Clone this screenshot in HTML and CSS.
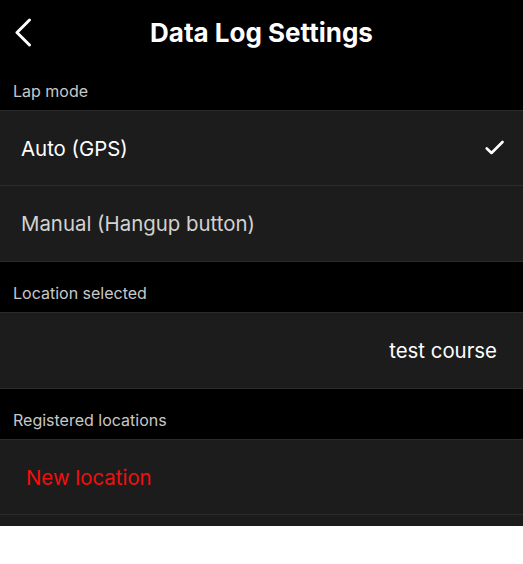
FILE: index.html
```html
<!DOCTYPE html>
<html lang="en">
<head>
    <meta charset="UTF-8">
    <meta name="viewport" content="width=device-width, initial-scale=1.0">
    <title>Data Log Settings</title>
    <link rel="stylesheet" href="styles.css">
</head>
<body>
    <div class="tela">
        <header class="barra">
            <a class="voltar" href="#">
                <svg width="20" height="30" viewBox="0 0 20 30">
                    <path d="M15.5 2 L3 14.5 L15.5 27" fill="none" stroke="#fff" stroke-width="3" stroke-linecap="round" stroke-linejoin="round"/>
                </svg>
            </a>
            <h1 class="titulo">Data Log Settings</h1>
        </header>

        <div class="secao">Lap mode</div>
        <div class="linha">
            <span>Auto (GPS)</span>
            <svg class="check" width="20" height="16" viewBox="0 0 20 16">
                <path d="M1.8 8.5 L6.5 13 L17.5 2" fill="none" stroke="#fff" stroke-width="2.6" stroke-linecap="round" stroke-linejoin="round"/>
            </svg>
        </div>
        <div class="linha apagada">
            <span>Manual (Hangup button)</span>
        </div>

        <div class="secao">Location selected</div>
        <div class="linha direita">
            <span>test course</span>
        </div>

        <div class="secao">Registered locations</div>
        <div class="linha novo">
            <span>New location</span>
        </div>
        <div class="linha"></div>
    </div>
</body>
</html>
```

FILE: styles.css
```css
body {
    margin: 0;
    background-color: #fff;
    font-family: Inter, "Noto Sans", sans-serif;
}

.tela {
    width: 523px;
    height: 526px;
    background-color: #000;
    overflow: hidden;
}

.barra {
    height: 59.6px;
    display: flex;
    align-items: center;
    justify-content: center;
    position: relative;
}

.voltar {
    position: absolute;
    left: 14px;
    top: 18px;
    display: flex;
}

.titulo {
    margin: 0;
    color: #fff;
    font-size: 26px;
    font-weight: 700;
    margin-top: 6px;
}

.secao {
    height: 51.4px;
    box-sizing: border-box;
    display: flex;
    align-items: flex-end;
    padding: 0 13px 9px;
    color: #c8c8c8;
    font-size: 16px;
    border-bottom: 1px solid #2c2c2c;
}

.linha {
    height: 75.4px;
    box-sizing: border-box;
    display: flex;
    align-items: center;
    justify-content: space-between;
    padding: 0 18px 0 21px;
    background-color: #1c1c1c;
    border-bottom: 1px solid #2c2c2c;
    color: #fff;
    font-size: 20.4px;
}

.apagada {
    color: #d2d2d2;
}

.direita {
    justify-content: flex-end;
    padding-right: 26px;
}

.novo {
    color: #f20f0f;
    padding-left: 26px;
}

.check {
    display: block;
}
```
